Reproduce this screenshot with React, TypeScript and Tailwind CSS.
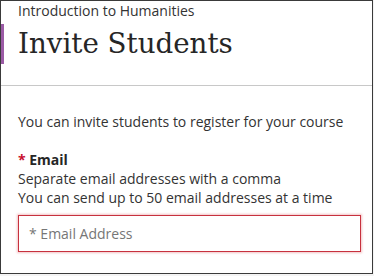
export default function App() {
  return (
    <div className="w-[374px] h-[276px] bg-[#f4f4f4] font-['Open_Sans',sans-serif]">
      <div className="w-[373px] h-[274px] border border-[#3a3a3a] bg-white overflow-hidden flex flex-col">
        {/* header */}
        <div className="h-[85px] border-b border-[#c8c8c8] flex flex-col">
          <p className="pl-[17px] pt-[1px] text-[14px] leading-[18px] text-[#333]">
            Introduction to Humanities
          </p>
          <div className="mt-[4px] flex items-center h-[40px]">
            <div className="w-[3px] h-[40px] bg-[#9b5ba5]" />
            <h1 className="pl-[14px] font-['DejaVu_Serif',serif] text-[27.7px] leading-[42px] text-[#262626]">
              Invite Students
            </h1>
          </div>
        </div>

        {/* body */}
        <div className="px-[17px] pt-[26px] text-[14px] text-[#333]">
          <p className="leading-[20px]">You can invite students to register for your course</p>

          <div className="mt-[18px] leading-[19px]">
            <p className="font-bold text-[#262626]">
              <span className="text-[#c8102e]">*</span> Email
            </p>
            <p>Separate email addresses with a comma</p>
            <p>You can send up to 50 email addresses at a time</p>
          </div>

          <div className="mt-[8px] h-[37px] w-[343px] border border-[#c7323e] shadow-[0_0_2px_1px_rgba(220,80,90,0.35)] flex items-center px-[10px]">
            <span className="text-[14px] text-[#767676]">* Email Address</span>
          </div>
        </div>
      </div>
    </div>
  );
}
